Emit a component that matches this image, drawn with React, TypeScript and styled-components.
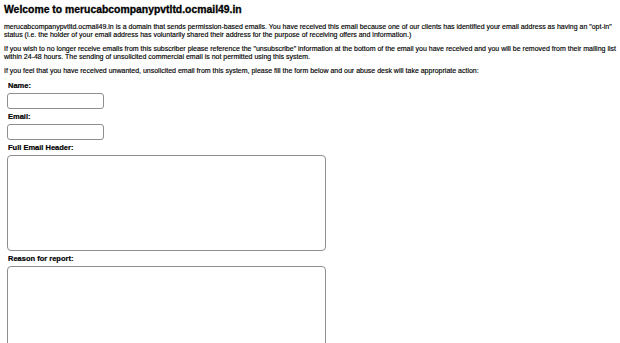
import React from "react";
import styled, { createGlobalStyle } from "styled-components";

const GlobalStyle = createGlobalStyle`
  html, body {
    margin: 0;
    padding: 0;
    background: #ffffff;
  }
  body {
    font-family: "Liberation Sans", Arial, sans-serif;
    color: #000000;
  }
`;

const Page = styled.div`
  padding: 3px 4px 0 4px;
  width: 612px;
`;

const Title = styled.h1`
  margin: 0 0 6px 0;
  font-size: 10.4px;
  line-height: 14px;
  font-weight: bold;
  -webkit-text-stroke: 0.3px #000;
`;

const Para = styled.p`
  margin: 0 0 6px 0;
  font-size: 7px;
  line-height: 8px;
  -webkit-text-stroke: 0.15px #000;
`;

const Form = styled.form`
  display: flex;
  flex-direction: column;
  padding-left: 3px;
`;

const Label = styled.label`
  display: block;
  padding-left: 1px;
  font-size: 7.5px;
  line-height: 9px;
  font-weight: bold;
  margin: 0 0 3px 0;
  -webkit-text-stroke: 0.2px #000;
`;

const Field = styled.input`
  display: block;
  box-sizing: border-box;
  width: 97px;
  height: 16px;
  margin: 0 0 3px 0;
  border: 1.5px solid #8e8e8e;
  border-radius: 3px;
  background: #fff;
  outline: none;
`;

const Area = styled.textarea<{ $h: number }>`
  display: block;
  box-sizing: border-box;
  width: 319px;
  height: ${(p) => p.$h}px;
  margin: 0 0 3px 0;
  border: 1.5px solid #8e8e8e;
  border-radius: 4px;
  background: #fff;
  resize: none;
  outline: none;
`;

export default function App() {
  return (
    <>
      <GlobalStyle />
      <Page>
        <Title>Welcome to merucabcompanypvtltd.ocmail49.in</Title>
        <Para>
          merucabcompanypvtltd.ocmail49.in is a domain that sends permission-based emails. You have received this email because one of our clients has identified your email address as having an "opt-in" status (i.e. the holder of your email address has voluntarily shared their address for the purpose of receiving offers and information.)
        </Para>
        <Para>
          If you wish to no longer receive emails from this subscriber please reference the "unsubscribe" information at the bottom of the email you have received and you will be removed from their mailing list within 24-48 hours. The sending of unsolicited commercial email is not permitted using this system.
        </Para>
        <Para>
          If you feel that you have received unwanted, unsolicited email from this system, please fill the form below and our abuse desk will take appropriate action:
        </Para>
        <Form>
          <Label>Name:</Label>
          <Field type="text" />
          <Label>Email:</Label>
          <Field type="text" />
          <Label>Full Email Header:</Label>
          <Area $h={96} />
          <Label>Reason for report:</Label>
          <Area $h={96} />
        </Form>
      </Page>
    </>
  );
}
